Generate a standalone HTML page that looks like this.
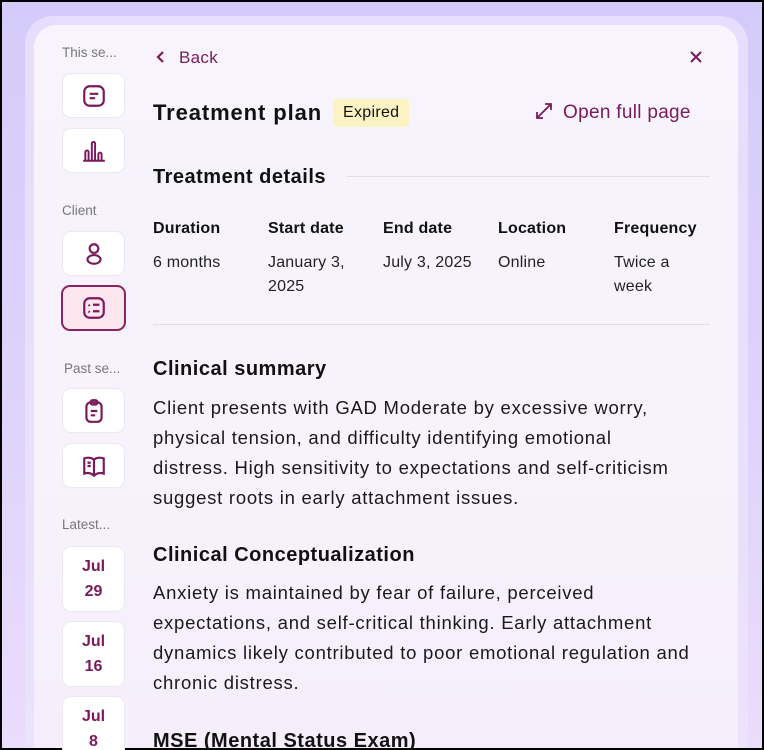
<!DOCTYPE html>
<html><head><style>
*{box-sizing:border-box;margin:0;padding:0}
html,body{width:764px;height:750px;overflow:hidden}
body{font-family:"Liberation Sans",sans-serif;background:#000;position:relative}
.bg{position:absolute;left:2px;top:2px;right:2px;bottom:2px;background:linear-gradient(180deg,#d4cbfa 0%,#ddd2fb 50%,#eadcfb 100%);overflow:hidden}
.frame{position:absolute;left:23px;top:14px;width:723px;height:760px;border-radius:28px;background:rgba(235,228,252,.75)}
.card{position:absolute;left:32px;top:23px;width:704px;height:760px;border-radius:22px;background:linear-gradient(180deg,#f7f4fd,#f7f1fc 70%,#f6eefb)}
.lbl{position:absolute;left:62px;font-size:13.5px;color:#777}
.btn{position:absolute;left:62px;width:63px;height:45px;background:#fff;border:1px solid #ece8f0;border-radius:9px;display:flex;align-items:center;justify-content:center;color:#7a1a5a}
.btn.sel{background:#fbe6ee;border:2px solid #8a2463;left:61px;width:65px;height:46px}
.date{height:66px;flex-direction:column;font-weight:bold;font-size:16px;line-height:25px}
.t{position:absolute;color:#111}
.acc{color:#7a1a5a}
h1{font-size:22px;font-weight:bold;letter-spacing:0.9px}
h2{font-size:20px;font-weight:bold;letter-spacing:0.5px}
.p{font-size:18.5px;letter-spacing:0.75px;line-height:30px;color:#1a1a1a;white-space:nowrap}
.col{position:absolute;top:220px;font-size:16px;letter-spacing:0.2px}
.col b{display:block;margin-bottom:13px;color:#111}
.col span{display:block;line-height:24px;color:#222}
.hr{position:absolute;height:1px;background:#e2dde6}
</style></head><body><div class="bg">
<div class="frame"></div><div class="card"></div>
</div>
<div class="lbl" style="top:45px">This se...</div>
<div class="btn" style="top:73px"><svg width="26" height="26" viewBox="0 0 24 24" fill="none" stroke="currentColor" stroke-width="2"><rect x="3" y="3" width="18" height="18" rx="5"/><path d="M8 10h8M8 14h5"/></svg></div>
<div class="btn" style="top:128px"><svg width="26" height="26" viewBox="0 0 24 24" fill="none" stroke="currentColor" stroke-width="1.8"><path d="M2 21h20M4 21v-8a1.5 1.5 0 013 0v8M10 21V5a1.5 1.5 0 013 0v16M16 21v-6a1.5 1.5 0 013 0v6"/></svg></div>
<div class="lbl" style="top:203px">Client</div>
<div class="btn" style="top:231px"><svg width="26" height="26" viewBox="0 0 24 24" fill="none" stroke="currentColor" stroke-width="2"><circle cx="12" cy="7" r="4"/><ellipse cx="12" cy="17" rx="6" ry="4"/></svg></div>
<div class="btn sel" style="top:285px"><svg width="26" height="26" viewBox="0 0 24 24" fill="none" stroke="currentColor" stroke-width="2"><rect x="3" y="3" width="18" height="18" rx="5"/><path d="M11 9h6M11 15h6M7 9l1 1M7 15l1 1"/></svg></div>
<div class="lbl" style="top:361px;left:64px">Past se...</div>
<div class="btn" style="top:388px"><svg width="26" height="26" viewBox="0 0 24 24" fill="none" stroke="currentColor" stroke-width="2"><rect x="5" y="4" width="14" height="18" rx="4"/><rect x="9" y="2" width="6" height="4" rx="1.5"/><path d="M9 12h6M9 16h4"/></svg></div>
<div class="btn" style="top:443px"><svg width="26" height="26" viewBox="0 0 24 24" fill="none" stroke="currentColor" stroke-width="2"><path d="M12 6v15M12 6C9 4 6 4 3 5v14c3-1 6-1 9 2 3-3 6-3 9-2V5c-3-1-6-1-9 1M6 9h3M6 12h3"/></svg></div>
<div class="lbl" style="top:517px">Latest...</div>
<div class="btn date" style="top:546px"><div>Jul</div><div>29</div></div>
<div class="btn date" style="top:621px"><div>Jul</div><div>16</div></div>
<div class="btn date" style="top:696px"><div>Jul</div><div>8</div></div>

<div class="t acc" style="left:155px;top:48px;font-size:17px;letter-spacing:0.3px"><svg width="12" height="14" viewBox="0 0 12 14" style="vertical-align:-1px;margin-right:12px"><path d="M8 2L3 7l5 5" fill="none" stroke="#7a1a5a" stroke-width="2.2"/></svg>Back</div>
<svg style="position:absolute;left:689px;top:50px" width="14" height="14" viewBox="0 0 14 14"><path d="M2 2l10 10M12 2L2 12" stroke="#7a1a5a" stroke-width="2"/></svg>
<h1 class="t" style="left:153px;top:100px">Treatment plan</h1>
<div class="t" style="left:333px;top:99px;background:#fcf3c4;padding:5px 10px;font-size:16px;letter-spacing:0.3px;border-radius:4px">Expired</div>
<div class="t acc" style="left:535px;top:102px;font-size:19px;letter-spacing:0.3px"><svg width="18" height="18" viewBox="0 0 18 18" style="vertical-align:-2px;margin-right:10px"><path d="M2 16L16 2M10 2h6v6M2 10v6h6" fill="none" stroke="#7a1a5a" stroke-width="1.8"/></svg>Open full page</div>
<h2 class="t" style="left:153px;top:166px">Treatment details</h2>
<div class="hr" style="left:347px;top:176px;width:363px"></div>
<div class="col" style="left:153px"><b>Duration</b><span style="margin-top:1px">6 months</span></div>
<div class="col" style="left:268px"><b>Start date</b><span>January 3,<br>2025</span></div>
<div class="col" style="left:383px"><b>End date</b><span>July 3, 2025</span></div>
<div class="col" style="left:498px"><b>Location</b><span>Online</span></div>
<div class="col" style="left:614px"><b>Frequency</b><span>Twice a<br>week</span></div>
<div class="hr" style="left:153px;top:324px;width:557px"></div>
<h2 class="t" style="left:153px;top:358px">Clinical summary</h2>
<div class="t p" style="left:153px;top:393px">Client presents with GAD Moderate by excessive worry,<br>physical tension, and difficulty identifying emotional<br>distress. High sensitivity to expectations and self-criticism<br>suggest roots in early attachment issues.</div>
<h2 class="t" style="left:153px;top:544px">Clinical Conceptualization</h2>
<div class="t p" style="left:153px;top:578px">Anxiety is maintained by fear of failure, perceived<br>expectations, and self-critical thinking. Early attachment<br>dynamics likely contributed to poor emotional regulation and<br>chronic distress.</div>
<h2 class="t" style="left:153px;top:730px">MSE (Mental Status Exam)</h2>
</body></html>
